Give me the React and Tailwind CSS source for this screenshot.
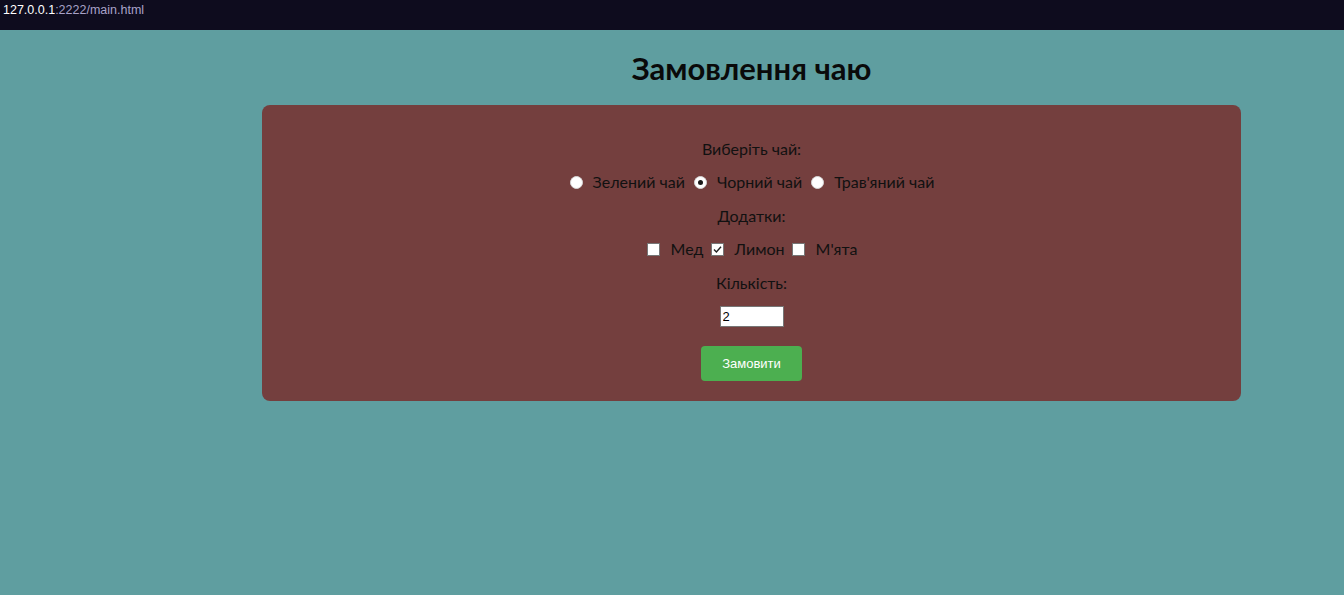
import { useState } from "react";

const teas = [
	{ id: "green", label: "Зелений чай" },
	{ id: "black", label: "Чорний чай" },
	{ id: "herbal", label: "Трав'яний чай" },
];

const extras = [
	{ id: "honey", label: "Мед" },
	{ id: "lemon", label: "Лимон" },
	{ id: "mint", label: "М'ята" },
];

const Radio = ({ checked, onClick }) => (
	<span
		onClick={onClick}
		className="ml-[5px] mr-[3px] inline-flex h-[13px] w-[13px] cursor-pointer items-center justify-center rounded-full border border-[#d8d8d8] bg-white"
	>
		{checked && <span className="h-[5px] w-[5px] rounded-full bg-[#1a1a1a]" />}
	</span>
);

const Checkbox = ({ checked, onClick }) => (
	<span
		onClick={onClick}
		className="ml-[4px] mr-[3px] inline-flex h-[13px] w-[13px] cursor-pointer items-center justify-center border border-[#767676] bg-white"
	>
		{checked && (
			<svg width="9" height="9" viewBox="0 0 9 9" fill="none">
				<path d="M1 4.6 L3.4 7 L8 1.8" stroke="#222" strokeWidth="1.4" />
			</svg>
		)}
	</span>
);

export default function App() {
	const [tea, setTea] = useState("black");
	const [selected, setSelected] = useState({ lemon: true });
	const [count, setCount] = useState("2");

	return (
		<div className="min-h-[595px] bg-[#5f9ea0] font-['Lato',sans-serif] text-[#111]">
			{/* Address bar */}
			<div className="h-[30px] bg-[#0e0c1e] pl-[3px] pt-[2px] font-['Liberation_Sans',sans-serif] text-[12.5px] leading-[16px]">
				<span className="text-white">127.0.0.1</span>
				<span className="text-[#a8a2c8]">:2222/main.html</span>
			</div>

			<div className="ml-[262px] w-[979px]">
				<h1 className="mt-[20px] h-[55px] text-center text-[31px] font-bold leading-[37px] text-[#0a0a0a]">
					Замовлення чаю
				</h1>

				{/* Form card */}
				<div className="flex flex-col items-center rounded-[8px] bg-[#743f3e] pb-[20px] pt-[27px] text-[16px]">
					<div className="flex h-[33.5px] items-center">Виберіть чай:</div>
					<div className="flex h-[33.5px] items-center">
						{teas.map((t) => (
							<label key={t.id} className="flex items-center">
								<Radio checked={tea === t.id} onClick={() => setTea(t.id)} />
								<span className="ml-[7px] mr-[4px]">{t.label}</span>
							</label>
						))}
					</div>
					<div className="flex h-[33.5px] items-center">Додатки:</div>
					<div className="flex h-[33.5px] items-center">
						{extras.map((e) => (
							<label key={e.id} className="flex items-center">
								<Checkbox
									checked={!!selected[e.id]}
									onClick={() => setSelected({ ...selected, [e.id]: !selected[e.id] })}
								/>
								<span className="ml-[8px] mr-[3px]">{e.label}</span>
							</label>
						))}
					</div>
					<div className="flex h-[33.5px] items-center">Кількість:</div>
					<div className="flex h-[33.5px] items-center">
						<input
							type="number"
							value={count}
							onChange={(e) => setCount(e.target.value)}
							className="h-[21px] w-[64px] border border-[#767676] bg-white px-[2px] font-['Liberation_Sans',sans-serif] text-[13px] text-black outline-none [appearance:textfield]"
						/>
					</div>
					<button className="mt-[13px] h-[35px] w-[101px] rounded-[4px] bg-[#4caf50] font-['Liberation_Sans',sans-serif] text-[13px] text-white">
						Замовити
					</button>
				</div>
			</div>
		</div>
	);
}
